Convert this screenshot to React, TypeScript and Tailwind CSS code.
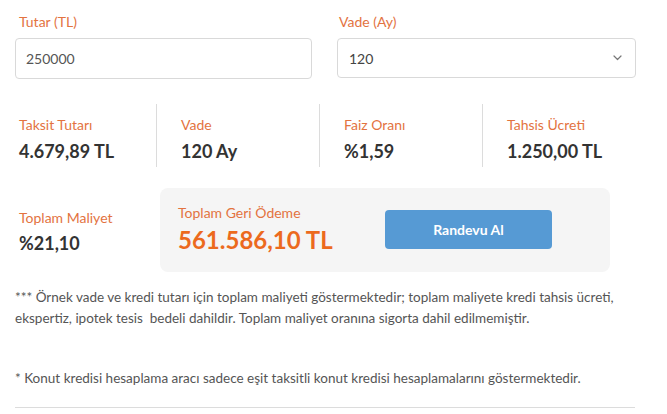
import React from "react";

interface Stat {
  label: string;
  value: string;
}

const stats: Stat[] = [
  { label: "Taksit Tutarı", value: "4.679,89 TL" },
  { label: "Vade", value: "120 Ay" },
  { label: "Faiz Oranı", value: "%1,59" },
  { label: "Tahsis Ücreti", value: "1.250,00 TL" },
];

function Chevron() {
  return (
    <svg width="9" height="6" viewBox="0 0 9 6" fill="none">
      <path d="M1 1l3.5 3.5L8 1" stroke="#777" strokeWidth="1.2" strokeLinecap="round" strokeLinejoin="round" />
    </svg>
  );
}

export default function App() {
  return (
    <div className="w-[667px] h-[414px] bg-white overflow-hidden font-['Lato',sans-serif]">
      <div className="ml-[15px] w-[621px]">
        {/* Inputs */}
        <div className="grid grid-cols-[297px_299px] gap-x-[25px] pt-[13px]">
          <div className="flex flex-col">
            <label className="pl-[4px] text-[14px] leading-[18px] text-[#e3733f]">Tutar (TL)</label>
            <div className="mt-[7px] h-[41px] rounded-[4px] border border-[#d9d9d9] flex items-center px-[10px] text-[14px] text-[#555]">
              250000
            </div>
          </div>
          <div className="flex flex-col">
            <label className="pl-[2px] text-[14px] leading-[18px] text-[#e3733f]">Vade (Ay)</label>
            <div className="mt-[7px] h-[40px] rounded-[4px] border border-[#d9d9d9] flex items-center justify-between pl-[11px] pr-[13px] text-[14px] text-[#444]">
              <span>120</span>
              <Chevron />
            </div>
          </div>
        </div>

        {/* Stats */}
        <div className="grid grid-cols-[141px_163px_163px_163px] mt-[25px]">
          {stats.map((s, i) => (
            <div
              key={s.label}
              className={
                i === 0
                  ? "pl-[4px] h-[63px] pt-[12px]"
                  : "pl-[24px] h-[63px] pt-[12px] border-l border-[#dcdcdc]"
              }
            >
              <div className="text-[14px] leading-[18px] text-[#e3733f]">{s.label}</div>
              <div className="mt-[6px] text-[18px] leading-[22px] font-bold text-[#333]">{s.value}</div>
            </div>
          ))}
        </div>

        {/* Totals */}
        <div className="flex items-center mt-[21px]">
          <div className="w-[145px] pl-[4px] mt-[3px]">
            <div className="text-[14px] leading-[18px] text-[#e3733f]">Toplam Maliyet</div>
            <div className="mt-[5px] text-[18px] leading-[22px] font-bold text-[#333]">%21,10</div>
          </div>
          <div className="w-[450px] h-[84px] rounded-[8px] bg-[#f5f5f5] flex items-center pl-[18px] pr-[58px] justify-between">
            <div className="-mt-[2px]">
              <div className="text-[14px] leading-[18px] text-[#e3733f]">Toplam Geri Ödeme</div>
              <div className="mt-[3px] text-[24px] leading-[30px] font-bold text-[#ec6a1e]">561.586,10 TL</div>
            </div>
            <button className="w-[167px] h-[39px] -mt-[2px] rounded-[4px] bg-[#569ad4] text-white text-[14px] font-bold">
              Randevu Al
            </button>
          </div>
        </div>

        {/* Footnotes */}
        <p className="mt-[15px] text-[13.5px] leading-[21px] text-[#555]">
          *** Örnek vade ve kredi tutarı için toplam maliyeti göstermektedir; toplam maliyete kredi tahsis ücreti,
          <br />
          ekspertiz, ipotek tesis&nbsp; bedeli dahildir. Toplam maliyet oranına sigorta dahil edilmemiştir.
        </p>
        <p className="mt-[39px] text-[13.5px] leading-[21px] text-[#555]">
          * Konut kredisi hesaplama aracı sadece eşit taksitli konut kredisi hesaplamalarını göstermektedir.
        </p>
        <div className="mt-[18px] w-[620px] border-t border-[#dcdcdc]" />
      </div>
    </div>
  );
}
